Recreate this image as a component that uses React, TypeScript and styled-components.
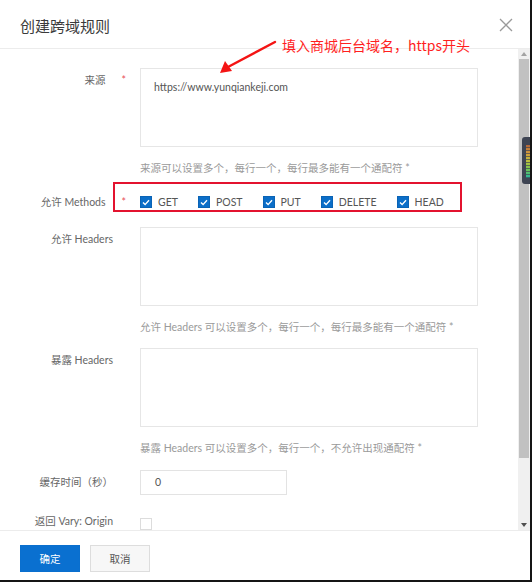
import React from 'react';
import styled, { createGlobalStyle } from 'styled-components';

const GlobalStyle = createGlobalStyle`
  html, body {
    margin: 0;
    padding: 0;
    background: #fff;
  }
  body {
    font-family: "Lato", "Noto Sans CJK SC", sans-serif;
  }
  * {
    box-sizing: border-box;
  }
`;

const Frame = styled.div`
  position: relative;
  width: 532px;
  height: 582px;
  border-right: 2px solid #151515;
  border-bottom: 2px solid #151515;
  display: flex;
  flex-direction: column;
  overflow: hidden;
  background: #fff;
`;

const Header = styled.header`
  height: 49px;
  flex: none;
  border-bottom: 1px solid #ececec;
  display: flex;
  align-items: center;
  justify-content: space-between;
  padding: 2px 17px 0 20px;
`;

const Title = styled.h2`
  margin: 0;
  font-family: "Noto Sans CJK SC", sans-serif;
  font-size: 15px;
  font-weight: 400;
  color: #3a3a3a;
`;

const CloseButton = styled.span`
  display: flex;
  width: 14px;
  height: 14px;
  cursor: pointer;
`;

const Body = styled.div`
  flex: 1;
  display: flex;
  min-height: 0;
`;

const Content = styled.div`
  flex: 1;
  overflow: hidden;
  padding-top: 19px;
`;

const Item = styled.div<{ $gap?: number }>`
  position: relative;
  display: grid;
  grid-template-columns: 140px 338px;
  margin-top: ${(p) => p.$gap ?? 0}px;
`;

const Label = styled.div<{ $required?: boolean; $center?: boolean }>`
  text-align: right;
  padding-right: ${(p) => (p.$required ? 14 : 27)}px;
  font-size: 10.5px;
  line-height: ${(p) => (p.$center ? 26 : 24)}px;
  color: #666;
  white-space: nowrap;
`;

const Star = styled.span`
  color: #e8505b;
  margin-left: 16px;
`;

const TextArea = styled.div`
  height: 79px;
  border: 1px solid #e6e6e6;
  padding: 10px 13px;
  font-size: 10.5px;
  line-height: 16px;
  color: #555;
`;

const Input = styled.div`
  width: 147px;
  height: 25px;
  border: 1px solid #e3e3e3;
  padding: 0 14px;
  font-size: 10.5px;
  line-height: 23px;
  color: #555;
`;

const Help = styled.div`
  grid-column: 2;
  margin-top: 13px;
  font-size: 10.5px;
  line-height: 16px;
  color: #9a9a9a;
  white-space: nowrap;
`;

const CheckGroup = styled.div`
  display: flex;
  align-items: center;
  height: 26px;
`;

const CheckItem = styled.label`
  display: flex;
  align-items: center;
  margin-right: 20px;
  font-size: 10.5px;
  color: #555;
`;

const Box = styled.span<{ $checked?: boolean; $top?: number }>`
  display: inline-flex;
  align-items: center;
  justify-content: center;
  width: 12px;
  height: 12px;
  margin-top: ${(p) => p.$top ?? 0}px;
  margin-right: 6px;
  background: ${(p) => (p.$checked ? '#0b6ec8' : '#fff')};
  border: 1px solid ${(p) => (p.$checked ? '#0a63b5' : '#dcdcdc')};
`;

const RedFrame = styled.div`
  position: absolute;
  left: 113px;
  top: -7px;
  width: 349px;
  height: 30px;
  border: 2px solid #e3132f;
  pointer-events: none;
`;

const Footer = styled.footer`
  height: 50px;
  flex: none;
  border-top: 1px solid #ececec;
  display: flex;
  gap: 10px;
  padding: 14px 20px 0;
`;

const Button = styled.button<{ $primary?: boolean }>`
  width: 60px;
  height: 27px;
  border: 1px solid ${(p) => (p.$primary ? '#0a6fce' : '#dddddd')};
  background: ${(p) => (p.$primary ? '#0a70d0' : '#f7f7f7')};
  color: ${(p) => (p.$primary ? '#fff' : '#555')};
  font-family: "Noto Sans CJK SC", sans-serif;
  font-size: 10.5px;
  padding: 0;
  cursor: pointer;
`;

const Scrollbar = styled.div`
  width: 12px;
  flex: none;
  display: flex;
  flex-direction: column;
  background: #f0f0f0;
`;

const ScrollArrow = styled.div`
  height: 10px;
  display: flex;
  align-items: center;
  justify-content: center;
`;

const Thumb = styled.div`
  height: 399px;
  margin: 0 1px;
  background: #c1c1c1;
`;

const Track = styled.div`
  flex: 1;
`;

const Note = styled.div`
  position: absolute;
  left: 282px;
  top: 35px;
  font-family: "Noto Sans CJK SC", sans-serif;
  font-size: 14px;
  line-height: 20px;
  color: #ff1f1f;
  white-space: nowrap;
`;

const Arrow = styled.svg`
  position: absolute;
  left: 214px;
  top: 36px;
`;

const Meter = styled.div`
  position: absolute;
  left: 522px;
  top: 137px;
  width: 10px;
  height: 47px;
  border-radius: 3px 0 0 3px;
  background: #3e4453;
  padding: 8px 2px 6px 4px;
`;

const MeterBars = styled.div`
  height: 100%;
  background:
    repeating-linear-gradient(to bottom, transparent 0 2px, rgba(62, 68, 83, 0.7) 2px 3px),
    linear-gradient(to bottom, #b0643a, #d49a3a, #b8c03c, #6cc453, #24b5a0);
`;

const Check = () => (
  <svg width="8" height="7" viewBox="0 0 8 7">
    <path d="M1 3.6 L3.1 5.6 L7 1.2" fill="none" stroke="#fff" strokeWidth="1.4" />
  </svg>
);

const methods = ['GET', 'POST', 'PUT', 'DELETE', 'HEAD'];

const App = () => (
  <>
    <GlobalStyle />
    <Frame>
      <Header>
        <Title>创建跨域规则</Title>
        <CloseButton aria-label="close">
          <svg width="14" height="14" viewBox="0 0 14 14">
            <path d="M1 1 L13 13 M13 1 L1 13" stroke="#9a9a9a" strokeWidth="1.3" />
          </svg>
        </CloseButton>
      </Header>
      <Body>
        <Content>
          <Item>
            <Label $required>
              来源<Star>*</Star>
            </Label>
            <TextArea>https://www.yunqiankeji.com</TextArea>
            <Help>来源可以设置多个，每行一个，每行最多能有一个通配符 *</Help>
          </Item>
          <Item $gap={13}>
            <Label $required $center>
              允许 Methods<Star>*</Star>
            </Label>
            <CheckGroup>
              {methods.map((m) => (
                <CheckItem key={m}>
                  <Box $checked>
                    <Check />
                  </Box>
                  {m}
                </CheckItem>
              ))}
            </CheckGroup>
            <RedFrame />
          </Item>
          <Item $gap={12}>
            <Label>允许 Headers</Label>
            <TextArea />
            <Help>允许 Headers 可以设置多个，每行一个，每行最多能有一个通配符 *</Help>
          </Item>
          <Item $gap={13}>
            <Label>暴露 Headers</Label>
            <TextArea />
            <Help>暴露 Headers 可以设置多个，每行一个，不允许出现通配符 *</Help>
          </Item>
          <Item $gap={14}>
            <Label>缓存时间（秒）</Label>
            <Input>0</Input>
          </Item>
          <Item $gap={14}>
            <Label>返回 Vary: Origin</Label>
            <div>
              <Box $top={9} />
            </div>
          </Item>
        </Content>
        <Scrollbar>
          <ScrollArrow>
            <svg width="6" height="4" viewBox="0 0 6 4">
              <path d="M0 4 L3 0 L6 4 Z" fill="#a3a3a3" />
            </svg>
          </ScrollArrow>
          <Thumb />
          <Track />
          <ScrollArrow>
            <svg width="6" height="4" viewBox="0 0 6 4">
              <path d="M0 0 L6 0 L3 4 Z" fill="#505050" />
            </svg>
          </ScrollArrow>
        </Scrollbar>
      </Body>
      <Footer>
        <Button $primary>确定</Button>
        <Button>取消</Button>
      </Footer>
      <Note>填入商城后台域名，https开头</Note>
      <Arrow width="64" height="40" viewBox="0 0 64 40">
        <path d="M61 6 L14 31" stroke="#f41414" strokeWidth="2.4" strokeLinecap="round" />
        <path d="M6 37 L11 25 L18 35 Z" fill="#f41414" />
      </Arrow>
      <Meter>
        <MeterBars />
      </Meter>
    </Frame>
  </>
);

export default App;
